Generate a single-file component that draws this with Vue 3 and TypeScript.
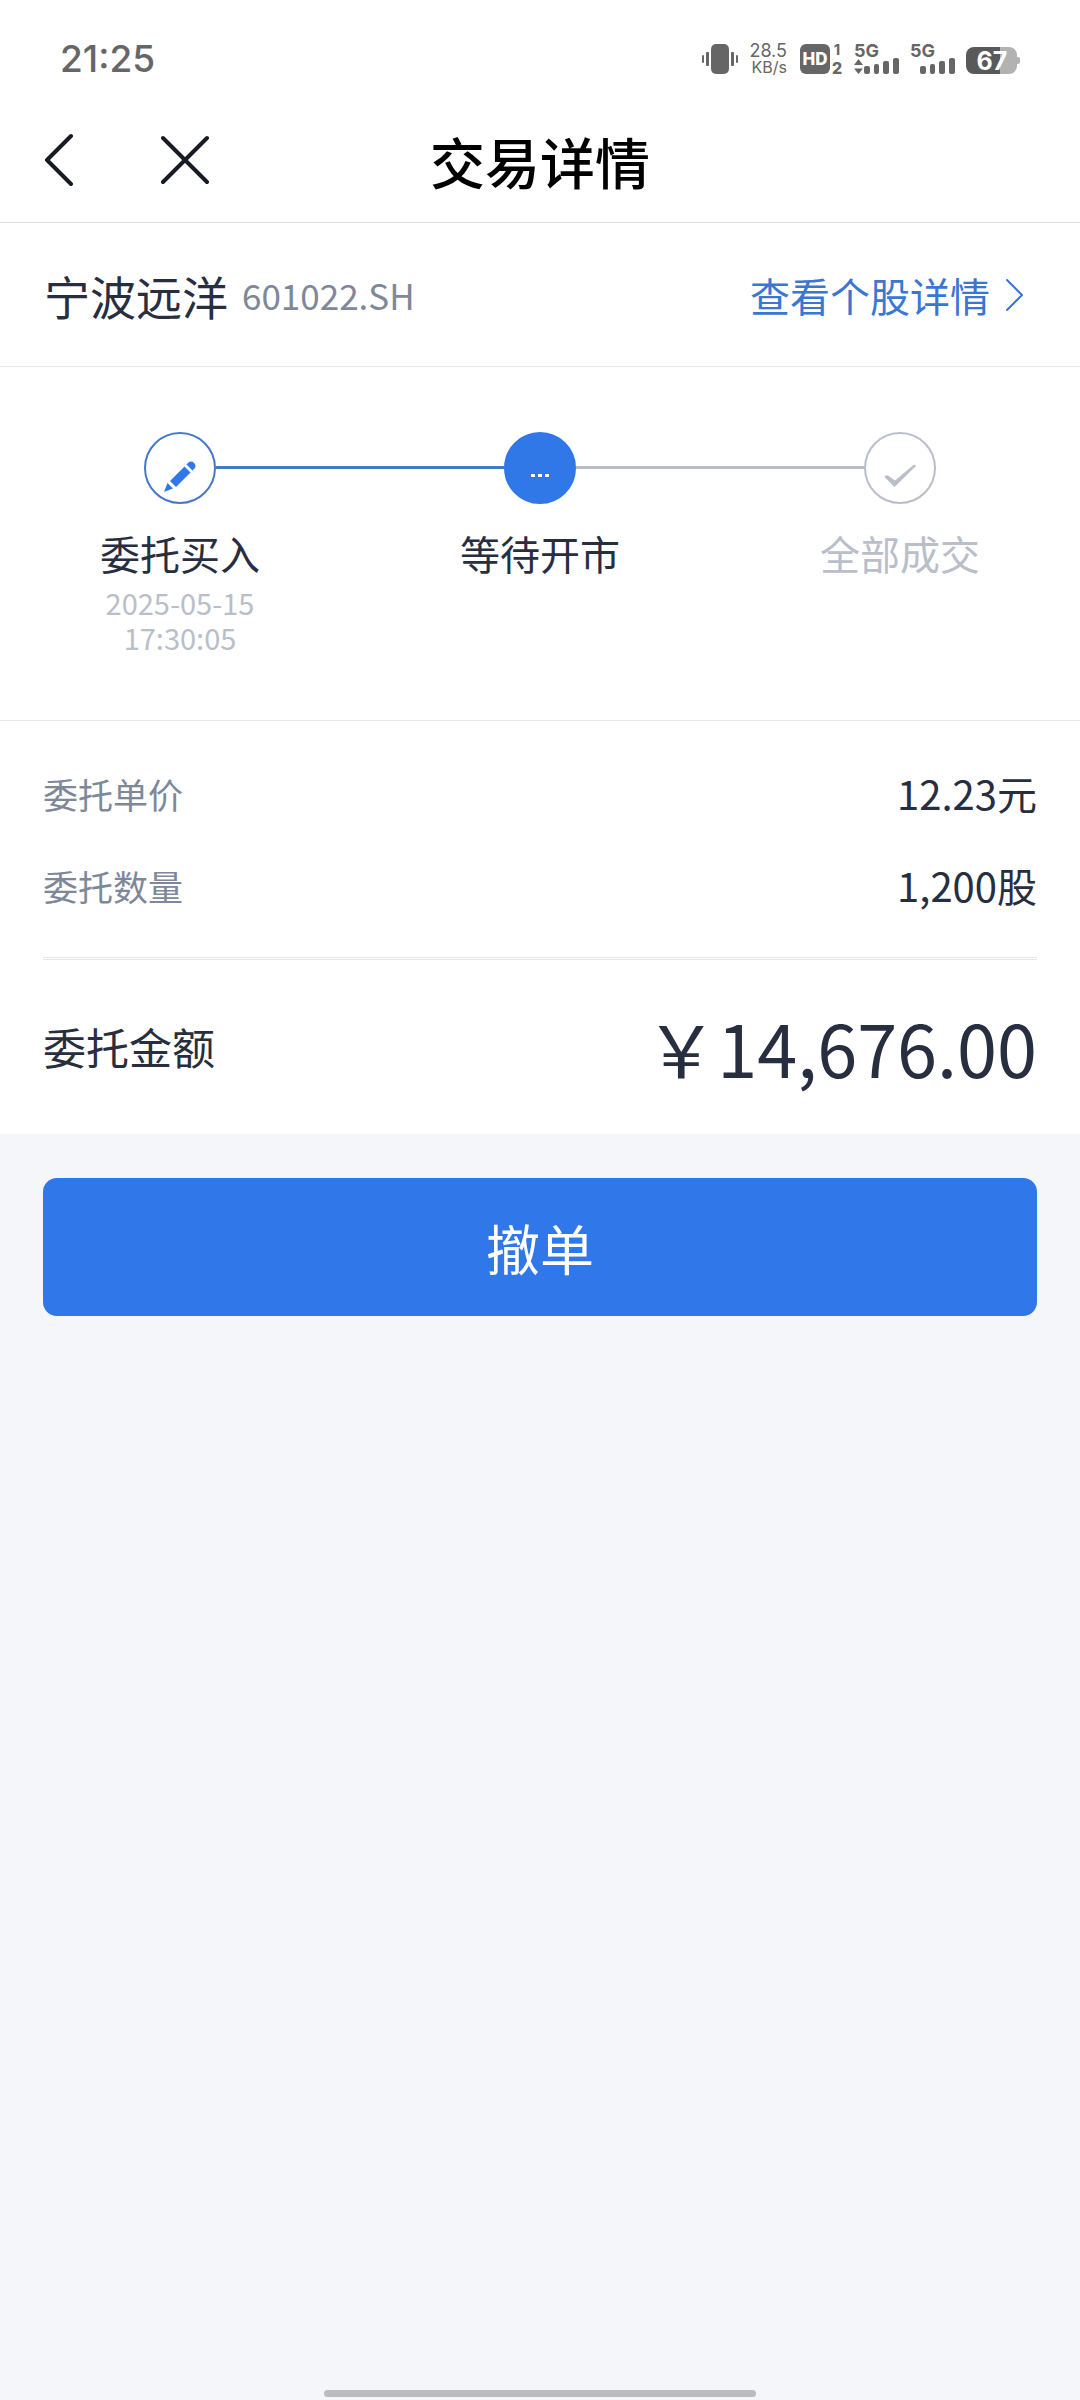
<script setup lang="ts">
interface Step {
  label: string
  state: 'done' | 'current' | 'pending'
  date?: string
  time?: string
}

interface Row {
  label: string
  value: string
}

const steps: Step[] = [
  { label: '委托买入', state: 'done', date: '2025-05-15', time: '17:30:05' },
  { label: '等待开市', state: 'current' },
  { label: '全部成交', state: 'pending' },
]

const rows: Row[] = [
  { label: '委托单价', value: '12.23元' },
  { label: '委托数量', value: '1,200股' },
]
</script>

<template>
  <div class="page">
    <div class="status">
      <time class="clock">21:25</time>
      <div class="indicators">
        <svg class="vibrate" width="38" height="32" viewBox="0 0 38 32" aria-hidden="true">
          <g fill="#666">
            <rect x="10" y="1" width="18" height="30" rx="5" />
            <rect x="1" y="12" width="2" height="8" rx="1" />
            <rect x="5" y="9" width="3" height="14" rx="1" />
            <rect x="30" y="9" width="3" height="14" rx="1" />
            <rect x="35" y="12" width="2" height="8" rx="1" />
          </g>
        </svg>
        <div class="speed">
          <span class="rate">28.5</span>
          <span class="unit">KB/s</span>
        </div>
        <svg width="44" height="44" viewBox="0 -6 44 44" aria-hidden="true">
          <rect x="0" y="1" width="30" height="30" rx="6" fill="#666" />
          <text x="15" y="22" text-anchor="middle" font-size="17" font-weight="800" fill="#fff">HD</text>
          <text x="37" y="12" text-anchor="middle" font-size="15" font-weight="700" fill="#666">1</text>
          <text x="37" y="31" text-anchor="middle" font-size="16" font-weight="800" fill="#666">2</text>
        </svg>
        <svg class="signal" width="46" height="44" viewBox="0 -6 46 44" aria-hidden="true">
          <text x="0" y="14" font-size="18" font-weight="700" fill="#666">5G</text>
          <g fill="#666">
            <path d="M4.500 16l4.500 6h-9zM4.500 31l4.500-5.500h-9z" />
            <rect x="10" y="23" width="6" height="8" rx="2" />
            <rect x="20" y="21" width="5" height="10" rx="2" />
            <rect x="29" y="18" width="6" height="13" rx="2" />
            <rect x="39" y="15" width="6" height="16" rx="2" />
          </g>
        </svg>
        <svg class="signal" width="46" height="44" viewBox="0 -6 46 44" aria-hidden="true">
          <text x="0" y="14" font-size="18" font-weight="700" fill="#666">5G</text>
          <g fill="#666">
            <rect x="10" y="23" width="6" height="8" rx="2" />
            <rect x="20" y="21" width="5" height="10" rx="2" />
            <rect x="29" y="18" width="6" height="13" rx="2" />
            <rect x="39" y="15" width="6" height="16" rx="2" />
          </g>
        </svg>
        <svg class="battery" width="54" height="44" viewBox="0 -6 54 44" aria-hidden="true">
          <path d="M34 4h9a8 8 0 0 1 8 8v2h1a2 2 0 0 1 2 2v3a2 2 0 0 1-2 2h-1v2a8 8 0 0 1-8 8h-9z" fill="#b2b2b2" />
          <path d="M8 4h26v27h-26a8 8 0 0 1-8-8v-11a8 8 0 0 1 8-8z" fill="#595959" />
          <text x="26" y="27" text-anchor="middle" font-size="25" font-weight="700" fill="#fff">67</text>
        </svg>
      </div>
    </div>

    <header class="nav">
      <div class="nav-actions">
        <button type="button" class="icon-button" aria-label="返回">
          <svg width="30" height="54" viewBox="0 0 30 54" aria-hidden="true">
            <path d="M28 3L4 27l24 24" />
          </svg>
        </button>
        <button type="button" class="icon-button" aria-label="关闭">
          <svg width="48" height="54" viewBox="0 0 48 54" aria-hidden="true">
            <path d="M2 5l44 44M46 5L2 49" />
          </svg>
        </button>
      </div>
      <h1 class="title">交易详情</h1>
      <div class="nav-balance"></div>
    </header>

    <main>
      <section class="stock">
        <div class="stock-id">
          <span class="stock-name">宁波远洋</span>
          <span class="stock-code">601022.SH</span>
        </div>
        <a class="stock-link" href="#">
          查看个股详情
          <svg width="20" height="34" viewBox="0 0 20 34" aria-hidden="true">
            <path d="M3 2l15 15L3 32" />
          </svg>
        </a>
      </section>

      <ol class="steps">
        <li v-for="step in steps" :key="step.label" class="step" :class="step.state">
          <div class="track">
            <span class="line before"></span>
            <span class="dot">
              <svg v-if="step.state === 'done'" width="72" height="72" viewBox="0 0 72 72" aria-hidden="true">
                <g fill="#3077e8">
                  <path d="M20 60l3.500-9 5.500 5.500z" />
                  <path d="M26 49l14.500-14.500 6 6-14.500 14.500z" />
                  <path d="M42.500 32.500l2.500-2.500a4.500 4.500 0 0 1 6 6l-2.500 2.500z" />
                </g>
              </svg>
              <svg v-else-if="step.state === 'current'" width="72" height="72" viewBox="0 0 72 72" aria-hidden="true">
                <g fill="#fff">
                  <rect x="27" y="42" width="4" height="3" />
                  <rect x="34" y="42" width="4" height="3" />
                  <rect x="41" y="42" width="4" height="3" />
                </g>
              </svg>
              <svg v-else width="72" height="72" viewBox="0 0 72 72" aria-hidden="true">
                <path d="M20.500 45q1-2.500 3.500-1.500l7 5L49.500 33q2-1 2.500 1L30.500 55z" fill="#b9bec9" />
              </svg>
            </span>
            <span class="line after"></span>
          </div>
          <span class="step-label">{{ step.label }}</span>
          <time v-if="step.date" class="step-time">{{ step.date }}<br />{{ step.time }}</time>
        </li>
      </ol>

      <section class="order">
        <dl class="rows">
          <div v-for="row in rows" :key="row.label" class="row">
            <dt>{{ row.label }}</dt>
            <dd>{{ row.value }}</dd>
          </div>
        </dl>
        <dl class="total">
          <dt>委托金额</dt>
          <dd>&#xFFE5;14,676.00</dd>
        </dl>
      </section>

      <div class="actions">
        <button type="button" class="cancel">撤单</button>
      </div>
    </main>

    <div class="home-bar"></div>
  </div>
</template>

<style>
body {
  margin: 0;
  background: #f4f6fa;
}
</style>

<style scoped>
.page {
  display: flex;
  flex-direction: column;
  min-height: 100vh;
  background: #f4f6fa;
  color: #272e40;
  font-family: "Noto Sans CJK SC", sans-serif;
}

.status {
  display: flex;
  align-items: center;
  justify-content: space-between;
  height: 97px;
  padding: 20px 60px 0;
  box-sizing: border-box;
  background: #fff;
  color: #666;
  font-family: Inter, sans-serif;
}

.clock {
  font-size: 37px;
  line-height: 40px;
  font-weight: 500;
}

.indicators {
  display: flex;
  align-items: center;
}

.indicators svg {
  font-family: Inter, sans-serif;
}

.speed {
  display: flex;
  flex-direction: column;
  align-items: flex-end;
  width: 40px;
  margin: 0 13px 0 8px;
  line-height: 17px;
}

.rate {
  font-size: 18px;
}

.unit {
  font-size: 16px;
}

.signal {
  margin-left: 10px;
}

.battery {
  margin-left: 10px;
}

.nav {
  display: flex;
  align-items: center;
  height: 125px;
  padding: 0 43px;
  background: #fff;
  border-bottom: 1px solid #e2e3e5;
}

.nav-actions,
.nav-balance {
  display: flex;
  flex: 1;
  gap: 88px;
}

.icon-button {
  display: flex;
  padding: 0;
  border: 0;
  background: none;
}

.icon-button svg {
  fill: none;
  stroke: #161b24;
  stroke-width: 4;
  stroke-linecap: round;
  stroke-linejoin: round;
}

.title {
  margin: 0;
  color: #000;
  font-size: 55px;
  line-height: 80px;
  font-weight: 500;
}

.stock {
  display: flex;
  align-items: center;
  justify-content: space-between;
  height: 143px;
  padding: 0 56px 0 44px;
  background: #fff;
  border-bottom: 1px solid #e9eaec;
}

.stock-id {
  display: flex;
  align-items: center;
  gap: 14px;
}

.stock-name {
  font-size: 46px;
  line-height: 66px;
}

.stock-code {
  color: #7e8899;
  font-size: 35px;
  line-height: 66px;
}

.stock-link {
  display: flex;
  align-items: center;
  gap: 14px;
  color: #3a76d2;
  font-size: 40px;
  line-height: 60px;
  text-decoration: none;
}

.stock-link svg {
  fill: none;
  stroke: #3a76d2;
  stroke-width: 2;
  stroke-linecap: round;
  stroke-linejoin: round;
}

.steps {
  display: flex;
  height: 353px;
  margin: 0;
  padding: 65px 0 0;
  box-sizing: border-box;
  list-style: none;
  background: #fff;
}

.step {
  display: flex;
  flex: 1;
  flex-direction: column;
  align-items: center;
}

.track {
  display: flex;
  align-items: center;
  align-self: stretch;
}

.line {
  flex: 1;
  height: 3px;
  margin-bottom: 1px;
  background: #b9bec9;
}

.done .after,
.current .before {
  background: #4678c6;
}

.step:first-child .before,
.step:last-child .after {
  background: transparent;
}

.dot {
  display: flex;
  align-items: center;
  justify-content: center;
  width: 72px;
  height: 72px;
  box-sizing: border-box;
  border: 2px solid #b9bec9;
  border-radius: 50%;
}

.dot svg {
  flex: none;
}

.done .dot {
  border-color: #4678c6;
}

.current .dot {
  border-color: #3077e8;
  background: #3077e8;
}

.step-label {
  margin-top: 19px;
  font-size: 40px;
  line-height: 60px;
}

.pending .step-label {
  color: #b9bec9;
}

.step-time {
  margin-top: 2px;
  color: #b9bec9;
  font-size: 29px;
  line-height: 35px;
  text-align: center;
}

.order {
  padding: 0 43px;
  background: #fff;
  border-top: 1px solid #e9eaec;
}

.rows {
  margin: 0;
  padding: 26px 0;
  border-bottom: 3px double #e5e6e8;
}

.row,
.total {
  display: flex;
  align-items: center;
  justify-content: space-between;
}

.row {
  height: 92px;
}

.row dt {
  color: #7e8899;
  font-size: 35px;
}

dd {
  margin: 0;
}

.row dd {
  font-size: 40px;
}

.total {
  height: 172px;
  margin: 0;
  padding-bottom: 2px;
}

.total dt {
  font-size: 43px;
}

.total dd {
  font-size: 72px;
}

.actions {
  padding: 44px 43px 0;
}

.cancel {
  width: 100%;
  height: 138px;
  padding: 0;
  border: 0;
  border-radius: 14px;
  background: #3077e9;
  color: #fff;
  font-family: inherit;
  font-size: 54px;
}

.home-bar {
  align-self: center;
  width: 40%;
  height: 7px;
  margin: auto 0 3px;
  border-radius: 4px;
  background: #bbbcbe;
}
</style>
